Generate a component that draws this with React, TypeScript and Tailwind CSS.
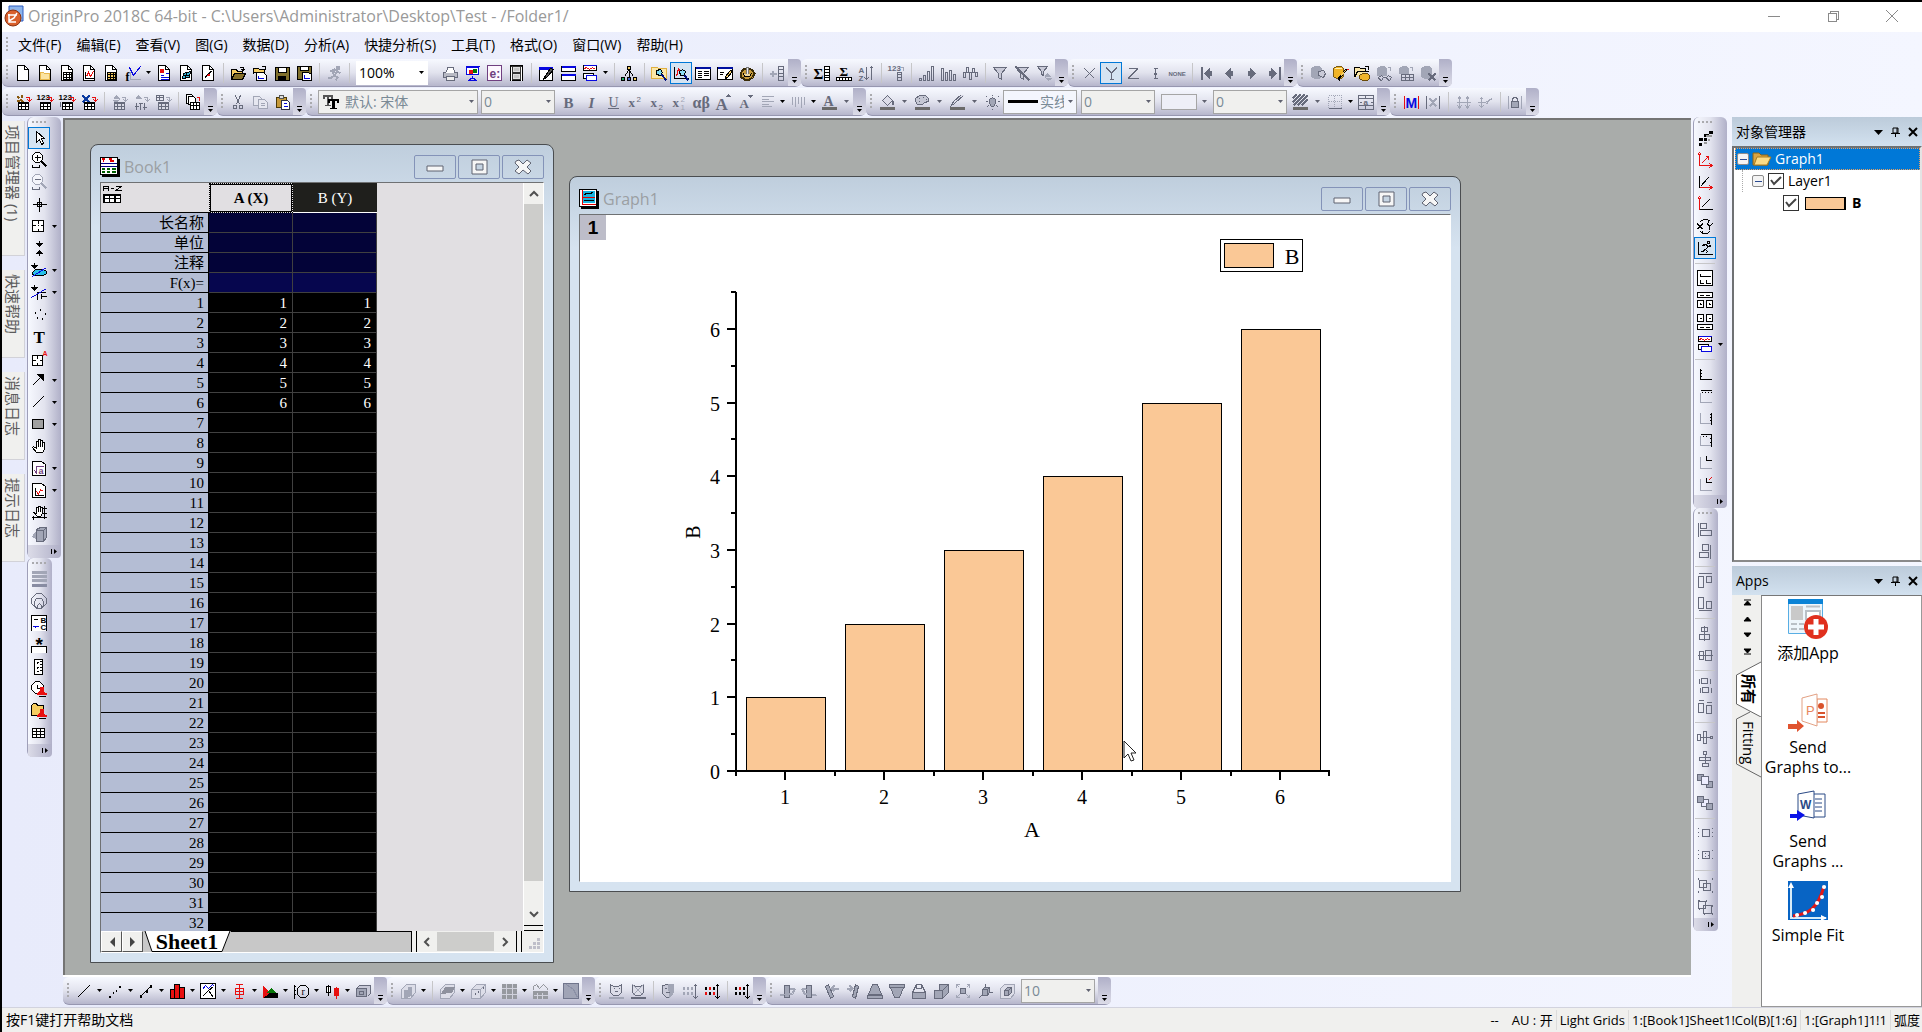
import { clsx } from 'clsx';
import { Fragment, useState } from 'react';
import type { ReactNode } from 'react';

const G = '#676b7c';
const S = '#a2a6b6';
const R = '#e81010';
const B = '#0808e0';
const Y = '#f5cd62';

// Icons are drawn on a 16x16 pixel grid, integer coordinates are pixel centres
const p = (d: string, stroke = '#000', fill = 'none', w = 1) => (
  <path key={d + stroke} d={d} stroke={stroke} fill={fill} strokeWidth={w} />
);
const t = (text: string, x: number, y: number, size: number, fill = '#000', weight = 700, family = 'Liberation Sans') => (
  <text key={text + x + y} x={x} y={y} fontSize={size} fill={fill} fontWeight={weight} fontFamily={family} stroke="none">
    {text}
  </text>
);

const page = 'M2 0H9L13 4V15H2Z';
const fold = 'M9 0V4H13';
const smallTable = (c = '#000', bg = '#fff') => [
  p('M3 8H13V15H3Z', c, bg),
  p('M3 9H13M3 12H13M6 8V15M10 8V15', c),
];
const arrowIn = (c: string) => p('M10 3H14V6M12 5L14 7L16 5', c);
const serif = 'Liberation Serif';

const icons: Record<string, ReactNode> = {
  // standard
  newProject: [p(page, '#000', '#fff'), p(fold)],
  newFolder: [p(page, '#000', '#fff'), p(fold), p('M3 7H6L7 8H12V14H3Z', '#e8b84c', '#fbe3a0')],
  newBook: [p(page, '#000', '#fff'), p(fold), p('M4 7H12V14H4ZM4 9H12M4 12H12M7 7V14M10 7V14')],
  newGraph: [p(page, '#000', '#fff'), p(fold), p('M4 6V13H12', '#000'), p('M5 11L7 7L9 11L12 6', R)],
  newMatrix: [p(page, '#000', '#fff'), p(fold), p('M4 7H12V14H4ZM4 9H12M4 12H12M7 7V14M10 7V14', '#000', Y)],
  newFunction: [p('M4 2L8 10L11 6L15 1', B), p('M1 14V9M15 14H5V6', S), t('f', 0, 15, 12, '#000', 700, serif)],
  newLayout: [p(page, '#000', '#fff'), p(fold), p('M4 4H7V7H4Z', R, R), p('M4 10H7M4 12H12M4 14H12M9 8H12', B)],
  newNotes: [p(page, '#000', '#fff'), p(fold), p('M5 8L12 6L11 12L4 13Z', '#000', '#38b6d8'), p('M5 10H11M8 7L7 13')],
  newExcel: [p(page, '#000', '#fff'), p(fold), p('M4 13L7 9L12 5'), p('M6 10H9V8', R, R)],
  open: [p('M1 14V4H6L7 6H12V8', '#000', Y), p('M1 14L4 8H15L12 14Z', '#000', '#86702a'), p('M9 2H13V5M14 4L13 5L11 4')],
  openTemplate: [p('M1 8V3H6L7 4H12V7H1', '#000', Y), p('M4 7H11L14 10V15H4Z', '#000', '#fff'), p('M6 10V13H11', B), p('M9 1H13V4')],
  save: [p('M1 2H15V15H1Z', '#000', '#80702c'), p('M4 2H12V7H4Z', '#000', '#fff'), p('M4 11H11V15H4Z', '#000', '#000')],
  saveTemplate: [p('M1 1H15V14H1Z', '#000', '#80702c'), p('M4 1H12V5H4Z', '#000', '#fff'), p('M6 7H12L15 9V15H6Z', '#000', '#fff'), p('M8 9V13H13', B)],
  runner: [p('M10 1H12V3H10ZM4 6L8 4L11 6L8 10L11 12L9 15M8 10L5 12H1M11 6L14 8M8 5L6 9', S, 'none', 2)],
  print: [p('M1 7H15V12H1Z', G, '#b8bac4'), p('M4 7L5 2H11L12 7', G, '#fff'), p('M4 11H12V15H4Z', G, '#eee'), p('M13 9H13', '#1a1')],
  slide: [p('M1 1H15M2 2H14V9H2Z', B, '#fff'), p('M5 5H8V8H5Z', R, R), p('M9 4H12V7H9Z', '#070', '#070'), p('M8 10V13M4 15H12L8 12Z', B)],
  refresh: [p('M1 0H15V15H1Z', '#704080', '#fdf8ff'), t('e:', 3, 12, 12, '#704080')],
  film: [p('M2 0H14V15H2Z', '#000', '#333'), p('M5 2H11V6H5ZM5 9H11V13H5Z', '#ddd', '#c4c4c4'), p('M3 1V15M13 1V15', '#fff')],
  code: [p('M1 2H14V15H1Z', '#000', '#fff'), p('M1 2H14V4H1Z', B, B), p('M12 3L7 10L5 14L9 11L15 4Z', '#000', '#555')],
  tile: [p('M1 1H15V6H1ZM1 9H15V15H1Z', '#000', '#fff'), p('M1 1H15M1 2H15M1 9H15M1 10H15', B)],
  cascade: [p('M1 0H14V5H1Z', '#000', '#fff'), p('M1 0H14', B), p('M2 3L4 2L7 4L10 2L13 4', R), p('M1 8H11V13H1Z', '#000', '#fff'), p('M4 10H14V15H4Z', B, '#fff')],
  tree: [p('M6 1H9V4H6Z', '#000', Y), p('M7 5L3 11M8 5L12 11M8 5V11'), p('M0 12H3V15H0Z', '#000', '#2a6'), p('M6 12H9V15H6Z', '#000', '#46c'), p('M12 12H15V15H12Z', '#000', Y)],
  explorer: [p('M0 2H6L7 3H15V13H0Z', '#e0b040', '#fbe7a8'), p('M5 5L9 4L11 7L9 10L5 9Z', '#000', '#7cd8f0'), p('M10 9L15 15', '#00107c', 'none', 2)],
  quick: [p('M1 1V13H15'), p('M3 11L5 3L8 8', R), p('M6 6L9 4L12 6L11 10L7 10Z', '#000', '#8fe0f4'), p('M11 10L15 15', '#00107c', 'none', 2)],
  results: [p('M0 2H15V14H0Z', '#000', '#fff'), p('M0 2H15M0 3H15', '#0010a0'), p('M2 6H6M8 6H13M2 8H6M8 8H13M2 10H6M8 10H13M2 12H6')],
  script: [p('M0 2H15V14H0Z', '#000', '#fff'), p('M0 2H15M0 3H15', '#0010a0'), p('M2 7H6M2 9H5'), p('M13 5L8 11L8 13L10 12L15 6Z', '#000', Y)],
  gear: [p('M3 5L5 3H10L13 5L15 8L13 12L10 14H5L1 11L1 8Z', '#3a2c08', '#c69a3a', 2), p('M7 2V9H9V2Z', '#777', '#eee'), p('M4 8L5 11H10L12 8', '#000', '#eed9a0')],
  addCol: [p('M0 8H7M3 5V11', S, 'none', 2), p('M9 1H14V15H9ZM9 4H14M9 8H14M9 11H14', G)],
  // column statistics
  sumCol: [t('Σ', -1, 13, 15, '#000', 700, serif), p('M10 1H15V15H10ZM10 4H15M10 7H15M10 10H15M10 12H15', '#000', '#fff')],
  sumRow: [t('Σ', 3, 10, 13, '#000', 700, serif), p('M0 12H15V15H0ZM3 12V15M6 12V15M9 12V15M12 12V15', '#000', '#fff')],
  sortAz: [t('A', 0, 7, 8, G), t('Z', 0, 15, 8, G), p('M8 1V14M6 12L8 14L10 12M13 14V1M11 3L13 1L15 3', G)],
  set123: [t('123', -1, 5, 8, G), p('M9 7H13V15H9ZM9 9H13M9 12H13', G), p('M12 2H15V5', S)],
  bars1: [p('M1 13H3V15H1ZM5 10H7V15H5ZM9 6H11V15H9ZM13 1H15V15H13Z', G)],
  bars2: [p('M1 3H3V15H1ZM5 7H7V15H5ZM9 5H11V15H9ZM13 9H15V15H13Z', G)],
  bars3: [p('M0 7H3V12H1V7M4 2H6V7H4ZM7 7H9V14H7ZM10 3H12V7H10ZM13 7H15V11H13Z', G)],
  filter: [p('M1 2H14L9 8V14L6 12V8Z', G, '#c9cad8')],
  filterOff: [p('M1 2H14L9 8V14L6 12V8Z', G, '#c9cad8'), p('M1 1L15 15', G, 'none', 2)],
  filterRe: [p('M1 1H11L7 6V10L5 9V6Z', G, '#c9cad8'), p('M8 11L11 8L14 11H8M9 12L12 15L15 13', S, S)],
  // plot designations
  setX: [p('M3 3L13 13M13 3L3 13', G, 'none', 1.4)],
  setY: [p('M3 2L8 8L13 2M8 8V14M6 14H10', G, 'none', 1.4)],
  setZ: [p('M3 3H12L3 13H13', G, 'none', 1.4)],
  setErr: [p('M6 3H10M6 13H10M8 3V13M7 8H9V9H7Z', G)],
  setNone: [t('NONE', -1, 10, 6, G)],
  first: [p('M2 1V14', G, 'none', 2), p('M5 8L10 3V6H12V10H10V13Z', G, G)],
  prev: [p('M4 8L9 3V6H11V10H9V13Z', G, G)],
  next: [p('M12 8L7 3V6H5V10H7V13Z', G, G)],
  last: [p('M14 1V14', G, 'none', 2), p('M11 8L6 3V6H4V10H6V13Z', G, G)],
  // database
  dbFind: [p('M1 3L4 1H9L11 3V11L9 13H4L1 11Z', S, S), p('M8 6L13 5L15 8L13 12L8 10Z', G, '#c9cad8')],
  dbEdit: [p('M1 3L4 1H9L11 3V11L9 13H4L1 11Z', '#7a5a10', '#f0b428'), p('M2 3H9', '#fff0b0'), p('M14 4L7 12L6 15', '#000', 'none', 2), p('M13 5L8 11', Y), p('M15 3V4', R, R, 2)],
  dbOpen: [p('M0 12V2H5L6 3H11V6', '#000', '#fbe7a8'), p('M0 12L3 6H14', '#000', '#fbe7a8'), p('M5 10L8 8H13L15 10V13L13 15H8L5 13Z', '#6a4a08', '#f0b428'), p('M10 1H14V4')],
  dbView: [p('M1 3L4 1H8L10 3V10H1Z', S, S), p('M2 12L5 10L7 12L5 15L3 14ZM10 12L12 10L15 12L13 15L11 14ZM7 12H10', G), p('M11 2H14V5', S)],
  dbTable: [p('M1 3L4 1H8L10 3V8H1Z', S, S), p('M3 9H15V15H3ZM3 12H15M7 9V15M11 9V15', G), p('M11 2H14V5', S)],
  dbDel: [p('M1 3L4 1H9L11 3V11L9 13H4L1 11Z', S, S), p('M8 8L15 15M15 8L8 15', G, 'none', 2)],
  // import
  wizard: [p('M2 2L4 4M6 0V3M1 6H4M5 5L8 8', '#8a5a10', 'none', 2), arrowIn(R), ...smallTable()],
  imp1: [t('123', -1, 5, 8), arrowIn(R), ...smallTable()],
  imp2: [t('123', -1, 5, 8), arrowIn(R), ...smallTable(), p('M1 7V12', G)],
  impX: [p('M1 1L8 8M8 1L1 8', '#0a3aa0', 'none', 2), arrowIn(R), ...smallTable()],
  re1: [p('M2 5L5 1L8 4M8 5L5 8L2 6', S, S), arrowIn(S), ...smallTable(G, '#d8d9e4')],
  re2: [p('M2 5L5 1L8 4', S, S), arrowIn(S), p('M3 8V15M7 8V15M11 8V15M1 12H5M5 9H9M9 13H13', G)],
  re3: [p('M1 1H8V6H1ZM1 3H8M4 1V6', G), arrowIn(S), ...smallTable(G, '#d8d9e4')],
  copies: [p('M1 0H6L8 2V9H1Z', '#000', '#fff'), p('M3 2H8L10 4V10H3Z', '#000', '#fff'), p('M11 3H14V6', R), p('M5 8H14V15H5ZM5 11H14M8 8V15M11 8V15', '#000', '#fff')],
  cut: [p('M5 1L9 10M10 1L6 10', G), p('M3 11H6V14H3ZM9 11H12V14H9Z', G)],
  copy: [p('M1 2H7L9 4V11H1Z', S, '#e6e7f0'), p('M6 5H12L15 8V14H6Z', S, '#e6e7f0'), p('M8 9H12M8 11H12', S)],
  paste: [p('M2 3H12V13H2Z', '#4c3a08', '#c79a3a'), p('M5 1H9V4H5Z', '#555', '#ddd'), p('M7 6H13L15 8V15H7Z', '#334', '#fff'), p('M9 9H12M9 12H13', B)],
  // format
  bold: [t('B', 2, 13, 15, G, 700, serif)],
  italic: [<text key="i" x="5" y="13" fontSize="15" fontWeight="700" fontStyle="italic" fill={G} stroke="none" fontFamily={serif}>I</text>],
  underline: [t('U', 3, 12, 14, G, 400, serif), p('M2 14H13', G)],
  sup: [t('x', 1, 12, 13, G, 700, serif), t('2', 9, 7, 8, G, 400)],
  sub: [t('x', 1, 12, 13, G, 700, serif), t('2', 9, 15, 8, G, 400)],
  supsub: [t('x', 1, 12, 13, G, 700, serif), t('2', 9, 7, 8, S, 400), t('1', 9, 15, 8, S, 400)],
  greek: [t('αβ', -1, 13, 16, G, 700, serif)],
  bigger: [t('A', 0, 15, 17, G, 700, serif), p('M11 2H15L13 0Z', G, G)],
  smaller: [t('A', 2, 13, 13, G, 700, serif), p('M11 1H15L13 3Z', G, G)],
  alignLeft: [p('M2 2H14M2 5H9M2 7H14M2 10H9M2 12H12', S)],
  alignTop: [p('M2 2V10M5 2V12M8 2V9M11 2V13M14 2V10', S)],
  fontColor: [t('A', 2, 11, 14, G, 700, serif), p('M0 14H15', '#6b6a6a', 'none', 3)],
  fill: [p('M3 6L8 1L13 6L8 11Z', G, '#dcdce8'), p('M13 6V10', G, G, 2), p('M0 14H15', '#6b6a6a', 'none', 3)],
  palette: [p('M1 4L5 1H11L14 4V7L10 8L8 10H3L1 7Z', G, '#c5c7d4'), p('M4 4H5M8 3H9M11 5H12M4 7H5', G), p('M0 14H15', '#6b6a6a', 'none', 3)],
  pen: [p('M14 1L5 9L2 11L4 7L12 0', G, '#dcdce8'), p('M0 14H15', '#6b6a6a', 'none', 3)],
  light: [p('M5 5L8 3L11 5V9L9 12H7L5 9Z', G, S), p('M8 0V1M1 7H3M13 7H15M2 2L3 3M14 2L13 3M2 13L4 11M14 13L12 11M8 14V15', G)],
  pattern: [p('M0 4L4 0M0 8L8 0M1 11L12 0M5 11L15 1M9 11L15 5', G, 'none', 2), p('M0 14H15', '#6b6a6a', 'none', 3)],
  borders: [<path key="b" d="M1 1H14V14H1ZM1 7H14M7 1V14" stroke={S} strokeDasharray="1 1" fill="none" />, p('M1 14H14', G)],
  tableCell: [p('M0 1H15V15H0ZM0 4H15M0 11H15M7 1V4M7 11V15', G), t('a', 5, 10, 8, G), p('M1 8H3M12 8H14', G)],
  maskM: [p('M1 1V14M15 1V14', R), t('M', 2, 13, 14, '#0808e0')],
  maskX: [p('M1 1V14M14 1V14', G), p('M4 4L11 12M11 4L4 12', S, 'none', 2)],
  mask1: [p('M4 2V14M2 5L4 2L6 5M2 11L4 14L6 11M12 2V14M10 5L12 2L14 5M10 11L12 14L14 11M1 8H15', S)],
  mask2: [p('M4 3V13M2 5L4 3L6 5M2 11L4 13L6 11M0 8H8L15 4M9 10L12 5', S)],
  lock: [p('M1 1V14M14 1V14', S), p('M4 7H11V13H4Z', G, S), p('M5 7V4L7 3H8L10 4V7', G)],
  // tools
  pointer: [p('M5 1V12L8 9L10 14L12 13L10 8H13Z', '#000', '#fff')],
  zoomIn: [p('M4 0H8L11 3V7L8 10H4L1 7V3Z', '#000', '#fff'), p('M3 5H9M6 2V8'), p('M10 9L15 14', '#000', 'none', 2), p('M1 12V15H8V12')],
  zoomOut: [p('M4 0H8L11 3V7L8 10H4L1 7V3Z', S, '#f4f5fb'), p('M3 5H9', G), p('M10 9L15 14', S, 'none', 2), p('M1 12V15H8V12', G)],
  reader: [p('M8 1V15M1 8H15'), p('M6 6H10V10H6Z')],
  selector: [p('M1 2H12V13H1Z', '#000', '#fff'), p('M7 2V5M7 10V13M1 7H4M9 7H12M6 7H7')],
  dataSel: [p('M8 0V5M5 3L8 6L11 3ZM8 15V10M5 13L8 10L11 13Z', '#000', '#000')],
  regMask: [p('M3 0V5M0 3L3 6L6 3Z', '#000', '#000'), p('M1 10L4 7H12L15 9V11L12 13H4L1 12Z', '#000', '#28c0e8'), p('M1 14L15 5', B)],
  regCurve: [p('M3 0V5M0 3L3 6L6 3Z', '#000', '#000'), p('M6 15V8H14M9 12H15M10 9V14'), p('M0 13L15 4', B)],
  draw: [p('M8 3H9M3 6H4M13 7H14M5 11H6M10 12H11', '#000', 'none', 2)],
  text: [t('T', 2, 14, 17, '#000', 700, serif)],
  annot: [p('M1 5H11V15H1Z', '#000', '#fff'), p('M6 5V8M6 12V15M1 10H4M8 10H11'), t('A', 11, 5, 7, R)],
  arrow: [p('M1 13L11 3'), p('M6 2H12V8Z', '#000', '#000')],
  line: [p('M1 13L12 2', '#000', 'none', 1.4)],
  rect: [p('M1 3H12V12H1Z', '#000', '#a0a0a0')],
  hand: [p('M5 14L1 9L2 8L5 10V3H7V8V1H9V8V2H11V8V4H13V11L11 14Z', '#000', '#fff')],
  formula: [p('M1 1H10L14 4V15H1Z', '#000', '#fff'), p('M3 10L5 13V6H12', '#704080'), t('a', 7, 13, 9, '#704080')],
  graphObj: [p('M1 1H10L14 4V15H1Z', '#000', '#fff'), p('M4 5V13H12'), p('M5 9L7 12L9 7L12 9', R)],
  pan: [p('M5 11L2 8L5 9V3H7V7V2H9V7V3H11V9L9 12H6Z', '#000', '#fff'), p('M0 13H15M2 11V15M13 1V14M11 4H15M11 9H15')],
  rotate3d: [p('M5 3L9 1H15V11L12 15H5Z', G, S), p('M5 4H12V15M12 4L15 1', G), p('M1 10L4 6V12Z', S, S)],
  stack: [p('M0 1H15M0 5H15M0 9H15', S, 'none', 3), p('M0 14H15', '#888ca2', 'none', 3)],
  radial: [p('M5 0H10L15 5V10L10 15H5L0 10V5ZM5 5H10L12 8V12L9 15H6L3 12V8ZM6 15V12L8 10L10 12V15', G)],
  legend: [p('M0 15V0H15V15', '#000', '#fff'), p('M2 4H6'), p('M1 11H7M4 10V12', B), t('B', 9, 7, 8), t('C', 9, 14, 8)],
  asterisk: [t('*', 4, 13, 19), p('M0 15V9H15V15', '#000', '#fff')],
  colorScale: [p('M3 0H11V15H3Z', '#000', '#fff'), p('M8 2H11M8 5H11M8 8H11M8 11H11M5 3H7M6 2V4M5 8H7M6 7V9M5 12H7')],
  dateStamp: [p('M4 0H8L12 4V8L8 12H4L0 8V4Z', '#000', '#fff'), p('M6 3V7H9'), p('M9 6H12V9L13 12H15V13H6V12L9 9Z', R, R), p('M7 15H14')],
  projStamp: [p('M0 2L2 0H5L6 2H12V12H0Z', '#000', Y), p('M9 6H12V9L13 12H15V13H6V12L9 9Z', R, R), p('M7 15H14')],
  gridTable: [p('M1 3H13V12H1ZM1 6H13M1 9H13M5 3V12M9 3V12', '#000', '#fff')],
  // graph
  offset: [p('M11 2H15M6 5H11M1 9H5M6 9H9M1 14H4', '#000', 'none', 3), p('M8 5H14M10 9H12M6 12H9', '#999', 'none', 2)],
  rescale: [p('M2 1V13H15M0 3L2 0L4 3M12 11L15 13L12 15', R), p('M4 11L11 4M8 4H11V7', R)],
  rescaleX: [p('M2 1V13', '#000'), p('M2 13H15M12 11L15 13L12 15', R), p('M3 12L11 3')],
  rescaleY: [p('M2 1V13M0 3L2 0L4 3', R), p('M2 13H15M4 11L12 3')],
  swapXY: [p('M0 5L5 11M5 5L0 11', '#000', 'none', 1.4), p('M10 5L12 8L15 5M12 8V11', '#000', 'none', 1.4), p('M3 3L6 1H10L13 3M11 1V4M12 13L10 15H6L3 13M5 12V15')],
  speed: [p('M1 1V14H15'), p('M10 1H12V3H10ZM5 5L8 4L11 6L8 9L10 11L8 13M8 9L5 11H3M11 6L14 5', '#000', 'none', 1.4)],
  layers1: [p('M0 0H15V15H0Z', '#000', '#fff'), p('M3 3V6H13M3 9V13H6M9 9V13H13')],
  layers2: [p('M0 0H15V5H0ZM0 8H6V15H0ZM9 8H15V15H9Z', '#000', '#fff'), p('M3 2V3H6M9 2V3H12M3 10V12H4M12 10V12H13')],
  layers3: [p('M0 10H15V15H0ZM0 0H6V7H0ZM9 0H15V7H9Z', '#000', '#fff'), p('M3 12V13H6M9 12V13H12M3 3V4H4M12 3V4H13')],
  axL: [p('M3 2V13H14M2 4H4M2 7H4M2 10H4M6 12V13M9 12V13M12 12V13')],
  axT: [p('M3 4V14H14M6 13V14M9 13V14M12 13V14', S), p('M3 2H14M5 3V4M8 3V4M11 3V4M14 3V4')],
  axR: [p('M3 2V13H13M6 12V13M9 12V13', S), p('M14 2V14M12 4H14M12 7H14M12 10H14')],
  axBox: [p('M3 3V13H13M6 12V13M9 12V13', S), p('M3 2H14V14M6 3V4M9 3V4M12 6H14M12 10H14')],
  axIn: [p('M3 2V14H14M6 13V14M9 13V14', S), p('M9 1V6H14M11 5V6M10 3H10', '#000', 'none', 1.4)],
  axIn2: [p('M3 2V14H14M6 13V14M9 13V14', S), p('M9 1V6H14M11 5V6', '#000', 'none', 1.4), p('M11 4L14 1', R)],
  // object edit
  alL: [p('M1 1V15M3 2H9V7H3ZM3 9H14V14H3Z', G)],
  alR: [p('M13 1V15M5 1H11V7H5ZM2 9H11V14H2Z', G)],
  alT: [p('M1 0H14M1 3H6V14H1ZM9 3H14V9H9Z', G)],
  alB: [p('M1 15H14M1 2H6V13H1ZM9 6H14V13H9Z', G)],
  alV: [p('M7 0V15M4 2H10V6H4ZM2 9H12V14H2Z', G)],
  alH: [p('M0 8H15M2 4H6V12H2ZM8 3H14V13H8Z', G)],
  sameW: [p('M2 1V6M13 1V6M4 1H10V6H4ZM3 10V15M14 10V15M5 10H11V15H5Z', G)],
  sameH: [p('M1 1H6M9 3H14M1 4H6V13H1ZM9 6H14V14H9Z', G)],
  disH: [p('M0 5H3V11H0ZM6 2H9V14H6ZM13 7H15V9H13ZM3 8H13', G)],
  disV: [p('M6 0H9V3H6ZM2 6H13V9H2ZM5 12H11V15H5ZM8 3V12', G)],
  front: [p('M0 1H6V7H0ZM9 8H15V14H9Z', G, S), p('M4 3H11V11H4Z', G, '#eef')],
  back: [p('M4 4H11V11H4Z', G, '#eef'), p('M0 1H6V7H0ZM9 8H15V14H9Z', G, S)],
  grp1: [p('M5 4H12V11H5Z', G), p('M0 3H1M0 7H1M0 11H1M15 3H14M15 7H14M15 11H14', G)],
  grp2: [p('M5 4H12V11H5ZM7 6H8M10 8H11M7 9H8', G), p('M0 3H1M0 7H1M0 11H1M15 3H14M15 11H14', G)],
  grp3: [p('M2 3H9V10H2ZM6 6H13V13H6Z', G), p('M0 1H1M14 1H15M0 14H1M14 14H15', G, 'none', 2)],
  grp4: [p('M1 2H8V9H1ZM6 6H14V14H6Z', G), p('M0 1H2M8 1H9M1 9H2M14 14H15M6 14H7M14 6H15', G, 'none', 2)],
  // 2D graphs
  gLine: [p('M1 14L13 2')],
  gScatter: [p('M1 13H3M5 9H6M8 7H9M11 3H13', '#000', '#000', 2)],
  gLineSym: [p('M2 13L13 2'), p('M1 13H3M7 8H9M11 3H13', '#000', '#000', 3)],
  gColumn: [p('M1 6H5V15H1ZM5 1H10V15H5ZM10 4H15V15H10Z', '#000', R)],
  gMulti: [p('M0 0H15V15H0Z', '#000', '#fff'), p('M2 6L5 2L8 5L12 1L14 3', B), p('M2 13L8 7L13 14M8 7L13 3')],
  gBox: [p('M4 1H11M8 1V15M4 15H11M4 5H12V11H4ZM4 8H12', R)],
  gArea: [p('M1 5L8 10H15V14H1Z', '#000', '#000'), p('M1 3L7 9L1 14Z', R, R), p('M5 9L9 5L13 9Z', '#0a7a0a', '#0a7a0a')],
  gPolar: [p('M1 1V15M0 3H2M0 7H2M0 11H2'), p('M7 2H12L15 5V11L12 14H7L4 11V5Z'), t('r', 8, 11, 10, '#000', 400, serif)],
  gStock: [p('M4 1V12M2 3H6V9H2Z', '#000', '#fff'), p('M12 3V15M10 5H14V12H10Z', R, R)],
  gTemplate: [p('M1 5L4 2H15V10L12 13', G, '#c9cad8'), p('M1 5H11V13H1Z', G, S), p('M4 8H8V11H4Z', G)],
  g3d1: [p('M1 6L6 1H15V9L10 15H1Z', S, '#dcdde8'), p('M4 15V7H6V15M8 13V4H10V12', S, S, 2)],
  g3d2: [p('M1 6L6 1H15V9L10 15H1Z', S, '#dcdde8'), p('M2 10L6 4H15L12 9Z', '#8e919e', '#8e919e')],
  g3d3: [p('M1 6L6 1H15V9L10 15H1ZM1 6H10V15M10 6L15 1', S, '#dcdde8'), p('M4 10H5M7 8H8M12 4H13', G, G, 2)],
  gHeat: [p('M1 1H15V15H1Z', '#96999f', '#96999f'), p('M5 0V15M11 0V15M0 5H15M0 11H15', '#d0d1dc')],
  gHeat2: [p('M1 8H15V15H1Z', '#96999f', '#96999f'), p('M1 6V3L4 1L7 5L11 1L15 5V6', '#96999f'), p('M5 9V15M10 9V15M1 12H15', '#d0d1dc')],
  gImage: [p('M0 0H15V15H0Z', '#70758c', '#a0a4b6'), p('M3 1L10 6L14 14', '#8b90a6')],
  // mask + 3D rotation
  face1: [p('M2 1L5 3H10L13 1V9L10 12H5L2 9Z', G, '#dcdde8'), p('M5 5H6M10 5H11M6 8H9', G), p('M0 14H15', S, 'none', 2)],
  face2: [p('M2 1L5 3H10L13 1V9L10 12H5L2 9Z', G, '#dcdde8'), p('M2 1L13 12M13 1L2 12', S), p('M0 14H15', G, 'none', 2)],
  face3: [p('M2 2L7 1H13V9L9 14H6L2 10Z', G, '#c9cad8'), p('M8 1H13V9L9 14Z', S, S), p('M4 5H6M5 9H9', G)],
  dots1: [p('M0 5H2M4 5H6M8 5H10M0 10H2M4 10H6M8 10H10', S, 'none', 3), p('M13 1V15M11 3L13 1L15 3M11 13L13 15L15 13', G)],
  dots2: [p('M0 5H2M4 10H6M8 5H10', '#000', 'none', 3), p('M4 5H6M0 10H2M8 10H10', R, 'none', 3), p('M13 1V15M11 3L13 1L15 3M11 13L13 15L15 13')],
  dots3: [p('M0 5H2M8 5H10M0 10H2M4 10H6M8 10H10', '#000', 'none', 3), p('M4 5H6', R, 'none', 3), p('M13 1V15M11 3L13 1L15 3M11 13L13 15L15 13')],
  rotL: [p('M5 2H10V14H5Z', G, S), p('M1 11L5 12M11 5L15 6L13 10L10 11', S, 'none', 2)],
  rotR: [p('M5 2H10V14H5Z', G, S), p('M15 11L11 12M5 5L1 6L3 10L6 11', S, 'none', 2)],
  tiltL: [p('M2 3L5 1L10 13L7 15Z', G, S), p('M8 5H15M11 2L8 5L11 8', S, 'none', 2)],
  tiltR: [p('M13 3L10 1L7 13L10 15Z', G, S), p('M1 5H7M4 2L7 5L4 8', S, 'none', 2)],
  down: [p('M5 1H10L14 11H1ZM0 12H15V15H0Z', G, S)],
  up: [p('M1 4H14L10 14H5ZM0 1H15V4H0Z', G, S)],
  persp: [p('M1 9H14V15H1Z', G, S), p('M5 1H10L14 9H1ZM5 1V5H10V1', G)],
  persp2: [p('M6 1H15V9L9 15H1V7H6Z', G, S), p('M1 7H9V15M9 7L15 1', G)],
  fit: [p('M5 5H10V10H5Z', G, S), p('M1 1L4 4M14 1L11 4M1 14L4 11M14 14L11 11M1 4V1H4M11 1H14V4M1 11V14H4M14 11V14H11', S)],
  axes3d: [p('M8 0V5M1 15L6 10M10 9H15', G), p('M5 6L7 4H12V9L10 12H5ZM5 6H10V12M10 6L12 4', G, S)],
  cube: [p('M1 5L5 1H15V10L11 15H1Z', S, '#dcdde8'), p('M5 7L8 4H12V9L9 12H5ZM5 7H9V12M9 7L12 4', G, S)],
};

function Icon({ name }: { name: string }) {
  return (
    <svg width="16" height="16" viewBox="0 0 16 16" className="shrink-0 overflow-visible" shapeRendering="crispEdges" aria-hidden>
      <g transform="translate(.5 .5)">{icons[name]}</g>
    </svg>
  );
}

function Caret({ grey = false }: { grey?: boolean }) {
  return (
    <svg width="5" height="3" viewBox="0 0 5 3" aria-hidden>
      <path d="M0 0H5L2.5 3Z" fill={grey ? '#5f6170' : '#000'} />
    </svg>
  );
}

// "*name" is pressed, "name>" has a drop-down, "name>>" a wide grey one, "|" is a separator
function Tools({ items, vertical = false }: { items: (string | ReactNode)[]; vertical?: boolean }) {
  return items.map((item, i) => {
    if (typeof item !== 'string') return <Fragment key={i}>{item}</Fragment>;
    if (item === '|') {
      return (
        <span key={i} className={clsx('flex shrink-0 items-center justify-center', vertical ? 'h-2 w-[22px]' : 'h-5 w-2')}>
          <span className={clsx('bg-[#c6c6c8]', vertical ? 'h-px w-5' : 'h-5 w-px')} />
        </span>
      );
    }
    const name = item.replace(/[*>]/g, '');
    const wide = item.endsWith('>>');
    return (
      <span key={i} className="flex shrink-0 items-center">
        <button
          type="button"
          aria-label={name}
          className={clsx('flex size-[22px] items-center justify-center', item.startsWith('*') && 'border border-[#0078d7] bg-[#d5e4f2]')}
        >
          <Icon name={name} />
        </button>
        {item.endsWith('>') && (
          <button type="button" aria-label={`${name} options`} className={clsx('flex h-[22px] items-center justify-center', wide ? 'w-[13px]' : 'w-[9px]')}>
            <Caret grey={wide} />
          </button>
        )}
      </span>
    );
  });
}

function Bar({ items }: { items: (string | ReactNode)[] }) {
  return (
    <div role="toolbar" className="flex h-7 shrink-0 rounded-md border-b border-[#9797b0] bg-linear-to-b from-[#f7f9ff] via-[#e2e3ee] to-[#b6b6cc]">
      <span className="flex w-[10px] items-center justify-center">
        <span className="h-4 w-[2px] bg-[repeating-linear-gradient(#aaaaae_0_2px,transparent_2px_4px)]" />
      </span>
      <div className="flex items-center">
        <Tools items={items} />
      </div>
      <button type="button" aria-label="toolbar options" className="flex w-[13px] flex-col items-center justify-end gap-[2px] rounded-r-sm bg-linear-to-b from-[#b0b0c8] to-[#dcdce8] pb-[3px]">
        <span className="h-px w-[5px] bg-black" />
        <Caret />
      </button>
    </div>
  );
}

function SideBar({ items, wide = false }: { items: string[]; wide?: boolean }) {
  return (
    <div role="toolbar" className={clsx('flex flex-col rounded-md border-l border-[#9f9fb8] bg-linear-to-r from-[#f7f9ff] via-[#e2e3ee] to-[#b0b0c8]', wide ? 'w-[34px]' : 'w-[25px]')}>
      <span className="flex h-[10px] items-center px-1">
        <span className="h-[2px] w-4 bg-[repeating-linear-gradient(90deg,#aaaaae_0_2px,transparent_2px_4px)]" />
      </span>
      <Tools items={items} vertical />
      <button type="button" aria-label="toolbar options" className="flex h-[13px] items-center justify-end gap-[2px] rounded-b-sm bg-linear-to-r from-[#dcdce8] to-[#b0b0c8] pr-1">
        <span className="h-[5px] w-px bg-black" />
        <svg width="3" height="5" aria-hidden>
          <path d="M0 0L3 2.5L0 5Z" />
        </svg>
      </button>
    </div>
  );
}

interface ComboProps {
  label: string;
  value: string;
  className: string;
  light?: boolean;
  children?: ReactNode;
}

function Combo({ label, value, className, light, children }: ComboProps) {
  return (
    <label
      className={clsx(
        'flex h-6 shrink-0 items-center overflow-hidden border',
        light ? 'border-white bg-white text-black' : 'border-[#a5a5a5] bg-[#f0f0ee] text-[#7a8a96]',
        className,
      )}
    >
      {children}
      <select aria-label={label} className="h-5 min-w-0 flex-1 appearance-none bg-transparent pl-[2px] text-sm leading-5">
        <option>{value}</option>
      </select>
      <span className="flex w-[12px] shrink-0 justify-center">
        <Caret grey={!light} />
      </span>
    </label>
  );
}

const menus = ['文件(F)', '编辑(E)', '查看(V)', '图(G)', '数据(D)', '分析(A)', '快捷分析(S)', '工具(T)', '格式(O)', '窗口(W)', '帮助(H)'];

const standardBar = [
  'newProject', 'newFolder', 'newBook', 'newGraph', 'newMatrix', 'newFunction>', 'newLayout', 'newNotes', 'newExcel', '|',
  'open', 'openTemplate', 'save', 'saveTemplate', '|', 'runner', '|',
  <Combo label="缩放" value="100%" light className="mr-[11px] ml-[3px] w-[72px]" />,
  'print', 'slide', 'refresh', 'film', '|', 'code', 'tile', 'cascade>', '|', 'tree', '|',
  'explorer', '*quick', 'results', 'script', 'gear', '|', 'addCol',
];

const formatBar = [
  <Combo label="字体" value="默认: 宋体" className="ml-[2px] w-[160px]">
    <svg width="16" height="16" className="mx-1 shrink-0" shapeRendering="crispEdges" aria-hidden>
      <path d="M0 1H10V5H8V3H6V11H8V12H2V11H4V3H2V5H0Z" fill="#555" />
      <path d="M5 5H16V9H14V7H12V14H14V15H7V14H9V7H7V9H5Z" />
    </svg>
  </Combo>,
  <Combo label="字号" value="0" className="mx-[3px] w-[74px]" />,
  'bold', 'italic', 'underline', 'sup', 'sub', 'supsub', 'greek', 'bigger', 'smaller', 'alignLeft>', 'alignTop>', 'fontColor>>',
];

const styleBar = [
  'fill>>', 'palette>>', 'pen>>', 'light',
  <Combo label="线型" value="实线" className="w-[74px] bg-[#f4f6fd]">
    <span className="ml-1 h-[3px] w-[30px] shrink-0 bg-black" />
  </Combo>,
  <Combo label="线宽" value="0" className="mr-1.5 ml-1 w-[74px]" />,
  <button type="button" aria-label="填充颜色" className="flex items-center">
    <span className="h-4 w-9 border border-[#a5a5a5] bg-[#eeeff7]" />
    <span className="flex w-[14px] justify-center">
      <Caret grey />
    </span>
  </button>,
  <Combo label="图案宽度" value="0" className="mx-[2px] w-[74px]" />,
  'pattern>>', 'borders>', 'tableCell',
];

const toolsBar = [
  '*pointer', 'zoomIn', 'zoomOut', 'reader', 'selector>', 'dataSel', 'regMask>', 'regCurve>', 'draw', 'text', 'annot',
  'arrow>', 'line>', 'rect>', 'hand', 'formula>', 'graphObj>', 'pan', 'rotate3d',
];

const sideTabs = [
  { label: '项目管理器 (1)', height: 'h-[135px]' },
  { label: '快速帮助', height: 'h-[88px]' },
  { label: '消息日志', height: 'h-[88px]' },
  { label: '提示日志', height: 'h-[88px]' },
];

function MdiWindow({ title, icon, className, children }: { title: string; icon: ReactNode; className: string; children: ReactNode }) {
  return (
    <section className={clsx('absolute flex flex-col rounded-t-lg border border-[#4a4d50] bg-linear-to-b from-[#bfcedd] to-[#d6e3f0] to-10% px-[9px] pb-[9px]', className)}>
      <header className="flex h-[37px] shrink-0 items-center gap-1 pt-1.5">
        {icon}
        <h2 className="flex-1 text-base leading-6 text-[#9b9fa3]">{title}</h2>
        <div className="flex gap-[2px]">
          {['M8 7H24V12H8Z', 'M9 1H24V15H9ZM13 5V11H20V5Z', 'M9 2L12 1L16 5L20 1L24 4L20 8L24 12L21 15L16 11L12 15L8 12L12 8L8 4Z'].map((d, i) => (
            <button key={d} type="button" aria-label={['最小化', '最大化', '关闭'][i]} className="flex h-6 w-[42px] items-center justify-center rounded-xs border border-[#8493b8]">
              <svg width="32" height="16" viewBox="0 0 32 16" aria-hidden>
                <path d={d} fill="#f6f6f6" stroke="#5f6270" fillRule="evenodd" />
              </svg>
            </button>
          ))}
        </div>
      </header>
      <div className="flex min-h-0 flex-1 flex-col border border-t-[#6f7173] border-r-white border-b-white border-l-[#6f7173] bg-white">{children}</div>
    </section>
  );
}

const Chevron = ({ d }: { d: string }) => (
  <svg width="10" height="10" viewBox="0 0 10 10" fill="none" stroke="#505050" strokeWidth="2" aria-hidden>
    <path d={d} />
  </svg>
);

function Worksheet() {
  const rows = ['长名称', '单位', '注释', 'F(x)=', ...Array.from({ length: 32 }, (_, i) => String(i + 1))];
  return (
    <>
      <div className="flex min-h-0 flex-1">
        <div className="min-w-0 flex-1 overflow-hidden bg-[#e1dfe2]">
          <table className="w-[276px] table-fixed border-separate border-spacing-0 font-['Liberation_Serif','Noto_Sans_CJK_SC',serif] text-[15px] leading-[18px]">
            <colgroup>
              <col className="w-[108px]" />
              <col className="w-[84px]" />
              <col className="w-[84px]" />
            </colgroup>
            <thead>
              <tr className="h-[30px]">
                <th className="border-b border-black p-0 align-top">
                  <svg width="20" height="21" className="ml-[2px]" shapeRendering="crispEdges" aria-label="A-Z">
                    <path d="M.5 8V3.500H5.500V8M.5 5.500H5.500M8 5.500H11M13 3.500H18L13 7.500H18.500" fill="none" stroke="#000" />
                    <path d="M0 11H18V20H0Z" />
                    <path d="M2 13H6V15H2ZM7 13H11V15H7ZM13 13H17V15H13ZM2 16H6V19H2ZM7 16H11V19H7ZM13 16H17V19H13Z" fill="#fff" />
                  </svg>
                </th>
                <th className="border border-dotted border-black bg-[#e1dfe2] p-0">
                  <span className="flex h-7 items-center justify-center border border-black">A (X)</span>
                </th>
                <th className="border-b border-white bg-[#1f1f1c] p-0 font-normal text-white">B (Y)</th>
              </tr>
            </thead>
            <tbody>
              {rows.map((row, i) => {
                const value = i > 3 && i < 10 ? row : '';
                const cell = clsx(
                  'h-5 border-r border-b border-[#404040] py-0 pr-[5px] text-right text-white',
                  i < 3 ? 'bg-[#030338]' : i === 3 ? 'bg-[#06064e]' : 'bg-black',
                );
                return (
                  <tr key={row}>
                    <th scope="row" className="h-5 border-r border-b border-black bg-[#b4bdd4] py-0 pr-1 text-right font-normal">
                      {row}
                    </th>
                    <td className={cell}>{value}</td>
                    <td className={cell}>{value}</td>
                  </tr>
                );
              })}
            </tbody>
          </table>
        </div>
        <div className="flex w-5 flex-col items-center border-l border-white bg-[#f0f0ee]">
          <button type="button" aria-label="向上滚动" className="flex h-[21px] items-center">
            <Chevron d="M1 7L5 3L9 7" />
          </button>
          <span className="w-full flex-1 bg-[#cdcdcb]" />
          <button type="button" aria-label="向下滚动" className="flex h-11 items-end pb-1.5">
            <Chevron d="M1 3L5 7L9 3" />
          </button>
          <span className="h-1.5 w-full border-y border-black bg-[#f0f0ee]" />
        </div>
      </div>
      <div className="flex h-[21px] shrink-0 bg-[#c8c8c8]">
        {['M8 0L3 5L8 10Z', 'M2 0L7 5L2 10Z'].map((d, i) => (
          <button key={d} type="button" aria-label={i ? '下一个' : '上一个'} className="flex w-[21px] items-center justify-center border border-t-white border-r-[#555] border-b-[#555] border-l-white bg-[#f0f0ee]">
            <svg width="10" height="10" aria-hidden>
              <path d={d} fill="#444" />
            </svg>
          </button>
        ))}
        <button type="button" className="grid w-[88px] place-items-center">
          <svg width="88" height="21" className="[grid-area:1/1]" aria-hidden>
            <path d="M2 0L9 20.500H79L87 0" fill="#fff" stroke="#000" />
          </svg>
          <span className="font-['Liberation_Serif'] text-[22px] leading-5 font-bold [grid-area:1/1]">Sheet1</span>
        </button>
        <span className="flex-1 border-t border-r border-black" />
        <span className="w-[5px] border-r border-black bg-[#f0f0ee]" />
        <div className="flex w-[100px] items-center justify-between border-r border-black bg-[#f0f0ee]">
          <button type="button" aria-label="向左滚动" className="flex w-5 justify-center">
            <Chevron d="M7 1L3 5L7 9" />
          </button>
          <span className="h-[19px] flex-1 bg-[#cdcdcb]" />
          <button type="button" aria-label="向右滚动" className="flex w-[22px] justify-center">
            <Chevron d="M3 1L7 5L3 9" />
          </button>
        </div>
        <span className="w-[5px] border-r border-black bg-[#f0f0ee]" />
        <span className="flex w-[21px] items-end justify-end bg-[#f0f0ee] p-[2px]">
          <svg width="12" height="12" fill="#bfbfc9" aria-hidden>
            <path d="M8 0h3v3h-3zM4 4h3v3h-3zM8 4h3v3h-3zM0 8h3v3h-3zM4 8h3v3h-3zM8 8h3v3h-3z" />
          </svg>
        </span>
      </div>
    </>
  );
}

const bars = [1, 2, 3, 4, 5, 6];

function Chart() {
  const x = (v: number) => Math.round(156 + (v - 0.5) * 98.9);
  const y = (v: number) => Math.round(556 - v * 73.7);
  return (
    <svg viewBox="0 0 870 666" className="min-h-0 w-full flex-1 font-['Liberation_Serif']" role="img" aria-label="B - A">
      <rect width="26" height="25" fill="#bdbdc9" />
      <text x="13" y="19" fontSize="19" fontWeight="700" textAnchor="middle" fontFamily="Liberation Sans">1</text>
      <g shapeRendering="crispEdges" stroke="#000">
        <rect x="640.5" y="24.5" width="82" height="32" fill="#fff" />
        <rect x="644.5" y="28.5" width="49" height="24" fill="#fac896" />
        {bars.map(v => (
          <rect key={v} x={x(v) - 38.5} y={y(v) + 0.5} width="79" height={556 - y(v)} fill="#fac896" />
        ))}
        <path d={`M156 ${y(6.5)}V557M155 556H${x(6.5) + 1}`} strokeWidth="2" />
        {[0, ...bars].map(v => (
          <path key={v} d={`M147 ${y(v)}H156M151 ${y(v + 0.5)}H156M${x(v + 0.5)} 556V561`} strokeWidth="2" />
        ))}
        {bars.map(v => (
          <path key={v} d={`M${x(v)} 556V565`} strokeWidth="2" />
        ))}
      </g>
      <g fontSize="20" textAnchor="middle">
        {[0, ...bars].map(v => (
          <text key={v} x="135" y={y(v) + 8}>{v}</text>
        ))}
        {bars.map(v => (
          <text key={v} x={x(v)} y="589">{v}</text>
        ))}
      </g>
      <g fontSize="22" textAnchor="middle">
        <text x="452" y="622">A</text>
        <text x="712" y="49">B</text>
        <text transform="translate(120 317) rotate(-90)" fontSize="20">B</text>
      </g>
      <path d="M544 526V543L548 539L551 546L554 545L551 538H556Z" fill="#fff" stroke="#222" />
    </svg>
  );
}

const BookIcon = () => (
  <svg width="20" height="20" shapeRendering="crispEdges" aria-hidden>
    <path d="M2 2H20V20H2Z" />
    <path d="M.5 .5H17.500V17.500H.5Z" fill="#fff" stroke="#000" />
    <path d="M2 2H5M9 2H12M3 4H4M10 4H14" stroke="#e00000" strokeWidth="2" />
    <path d="M1 6.500H17M1 9.500H17" stroke="#000080" />
    <path d="M2 12H5M7 12H10M12 12H16M2 15H5M7 15H10M12 15H16" stroke="#006000" strokeWidth="2" />
  </svg>
);

const GraphIcon = () => (
  <svg width="20" height="20" shapeRendering="crispEdges" aria-hidden>
    <path d="M2 2H20V20H2Z" />
    <path d="M.5 .5H17.500V17.500H.5Z" fill="#fff" stroke="#000" />
    <path d="M3 2H16V14H3Z" fill="#18b4e0" />
    <path d="M3 1V15H17M3 8H16" stroke="#e00000" fill="none" />
    <path d="M5 6L8 4L11 5L14 3M5 11H8L10 12L15 11" stroke="#000" fill="none" />
  </svg>
);

function DockTitle({ title }: { title: string }) {
  return (
    <header className="flex h-[29px] shrink-0 items-center bg-linear-to-b from-[#bccbda] to-[#d2e1ef] pr-px pl-1 text-sm">
      <h2 className="flex-1 leading-5">{title}</h2>
      {['M0 3H9L4.500 8Z', 'M2 1H7V6H2ZM6 1V6M0 6.500H9M4.500 6V10', 'M1 1L9 9M9 1L1 9'].map((d, i) => (
        <button key={d} type="button" aria-label={['菜单', '自动隐藏', '关闭'][i]} className="flex w-[17px] justify-center">
          <svg width="10" height="10" fill={i ? 'none' : '#000'} stroke={i ? '#000' : 'none'} strokeWidth={i === 2 ? 2 : 1} aria-hidden>
            <path d={d} />
          </svg>
        </button>
      ))}
    </header>
  );
}

function Check({ label }: { label: string }) {
  const [checked, setChecked] = useState(true);
  return (
    <span className="grid size-4 place-items-center">
      <input type="checkbox" aria-label={label} checked={checked} onChange={() => setChecked(!checked)} className="size-4 appearance-none border border-[#333] bg-white [grid-area:1/1]" />
      {checked && (
        <svg width="12" height="10" className="pointer-events-none [grid-area:1/1]" fill="none" stroke="#444" strokeWidth="2" aria-hidden>
          <path d="M1 4L4 8L11 1" />
        </svg>
      )}
    </span>
  );
}

const Minus = () => (
  <button type="button" aria-label="折叠" className="flex size-3 items-center justify-center rounded-xs border border-[#8c8c8c] bg-[#f4f4f4]">
    <span className="h-px w-[7px] bg-[#2a4a90]" />
  </button>
);

const apps = [
  {
    label: '添加App',
    art: (
      <>
        <path d="M.5 .5H34.500V34.500H.5Z" fill="#eef6fc" stroke="#58aee4" />
        <path d="M0 0H35V5H0Z" fill="#0b83d6" />
        <path d="M3 7H15V21H3Z" fill="#c9c9c9" />
        <path d="M18 7.500H32M18 12H32V20H18ZM3 25H9M11 25H16M3 30H9M11 30H16" stroke="#b9c0c6" strokeWidth="2" fill="#fff" />
        <circle cx="28" cy="28" r="12" fill="#e0301e" />
        <path d="M28 20V36M20 28H36" stroke="#fff" strokeWidth="5" />
      </>
    ),
  },
  {
    label: 'Send\nGraphs to...',
    art: (
      <>
        <path d="M29 6H39V29H29Z" fill="#fff" stroke="#e3885f" />
        <circle cx="33" cy="13" r="3" fill="#d9532c" />
        <path d="M30 20H37M30 24H37" stroke="#d9532c" strokeWidth="2" />
        <path d="M14 5L29 1V33L14 28Z" fill="#fff" stroke="#e3a184" />
        <text x="18" y="22" fontSize="13" fill="#e8865c" fontFamily="Liberation Sans">P</text>
        <path d="M0 31H9V27L16 33L9 39V36H0Z" fill="#e0532f" />
      </>
    ),
  },
  {
    label: 'Send\nGraphs ...',
    art: (
      <>
        <path d="M25 7H37V30H25Z" fill="#fff" stroke="#2b4a86" />
        <path d="M27 12H34M27 16H34M27 20H34M27 24H34" stroke="#2b4a86" />
        <path d="M10 7L26 4V31L10 28Z" fill="#fff" stroke="#2b4a86" />
        <text x="12" y="22" fontSize="12" fontWeight="700" fill="#2b4a86" fontFamily="Liberation Sans">W</text>
        <path d="M2 27H9V23L17 28L9 34V31H2Z" fill="#0a12e8" />
      </>
    ),
  },
  {
    label: 'Simple Fit',
    art: (
      <>
        <path d="M0 0H40V39H0Z" fill="#0864c4" />
        <path d="M3 4V37H38" stroke="#d8ecf8" strokeWidth="2" fill="none" />
        <path d="M0 7L3 1L6 7ZM33 34L39 37L33 40Z" fill="#fff" />
        <path d="M5 35C20 33 30 28 36 5" stroke="#e01818" strokeWidth="3" fill="none" />
        <path d="M9 34h.1M17 32h.1M25 29h.1M29 22h.1M34 16h.1M36 6h.1" stroke="#fff" strokeWidth="4" strokeLinecap="round" />
      </>
    ),
  },
];

export default function App() {
  return (
    <div className="flex min-h-screen flex-col border-t-2 border-l-2 border-black bg-linear-to-r from-[#e8ebfb] to-[#f4f6ff] font-['Open_Sans','Noto_Sans_CJK_SC',sans-serif] text-black">
      <header className="flex h-[30px] items-center bg-white pb-[2px] pl-[2px] text-[#999]">
        <svg width="20" height="22" viewBox="0 0 20 22" aria-hidden>
          <path d="M5 1H19V16H5Z" fill="#8cb4ec" stroke="#2c5cc0" />
          <circle cx="9" cy="13" r="8" fill="#d9602c" stroke="#8a3210" />
          <path d="M4 10H13M5 16L10 13L13 8M5 9V17H12" stroke="#fff" strokeWidth="1.500" fill="none" />
        </svg>
        <h1 className="flex-1 pl-1 text-base leading-6">OriginPro 2018C 64-bit - C:\Users\Administrator\Desktop\Test - /Folder1/</h1>
        {['M0 7H12', 'M1 4H9V12H1ZM3 4V2H11V10H9', 'M0 1L12 13M12 1L0 13'].map((d, i) => (
          <button key={d} type="button" aria-label={['最小化', '还原', '关闭'][i]} className="flex w-[59px] justify-center">
            <svg width="13" height="14" fill="none" stroke="#8a8a8a" shapeRendering={i < 2 ? 'crispEdges' : 'auto'} aria-hidden>
              <path d={d} />
            </svg>
          </button>
        ))}
      </header>

      <nav className="flex h-[27px] items-center pb-[2px] text-sm leading-5">
        <span className="mr-2 ml-[4px] h-4 w-[2px] bg-[repeating-linear-gradient(#aaaaae_0_2px,transparent_2px_4px)]" />
        {menus.map(menu => (
          <button key={menu} type="button" className="mr-[15px] first-of-type:ml-[2px]">
            {menu}
          </button>
        ))}
      </nav>

      <div className="flex h-[29px]">
        <Bar items={standardBar} />
        <Bar items={['sumCol', 'sumRow', 'sortAz', '|', 'set123', '|', 'bars1', 'bars2', 'bars3', '|', 'filter', 'filterOff', 'filterRe']} />
        <Bar items={['setX', '*setY', 'setZ', 'setErr', 'setNone', '|', 'first', 'prev', 'next', 'last']} />
        <Bar items={['dbFind', 'dbEdit', 'dbOpen', 'dbView', 'dbTable', 'dbDel']} />
      </div>
      <div className="flex h-[29px]">
        <Bar items={['wizard', 'imp1', 'imp2', 'impX', '|', 're1', 're2', 're3', '|', 'copies']} />
        <Bar items={['cut', 'copy', 'paste']} />
        <Bar items={formatBar} />
        <Bar items={styleBar} />
        <Bar items={['maskM', 'maskX', '|', 'mask1', 'mask2', '|', 'lock']} />
      </div>

      <div className="flex flex-1">
        <div className="flex w-[25px] flex-col gap-[14px] pt-1">
          {sideTabs.map(tab => (
            <button
              key={tab.label}
              type="button"
              className={clsx(
                'flex w-[23px] items-center justify-start border-r border-b border-[#d2d2d8] bg-[#f0f0ee] pt-1 text-[15px] leading-[22px] whitespace-pre text-[#5c5c5c] [text-orientation:sideways] [writing-mode:vertical-rl]',
                tab.height,
              )}
            >
              {tab.label}
            </button>
          ))}
        </div>
        <div className="w-9">
          <SideBar wide items={toolsBar} />
          <SideBar items={['stack', 'radial', 'legend', 'asterisk', 'colorScale', 'dateStamp', 'projStamp', 'gridTable']} />
        </div>

        <div className="flex min-w-0 flex-1 flex-col">
          <main className="relative mt-px flex-1 overflow-hidden border-t-2 border-l-2 border-[#747474] bg-[#a9acaa]">
            <MdiWindow title="Book1" icon={<BookIcon />} className="top-6 left-[25px] h-[819px] w-[464px]">
              <Worksheet />
            </MdiWindow>
            <MdiWindow title="Graph1" icon={<GraphIcon />} className="top-14 left-[504px] h-[716px] w-[892px]">
              <Chart />
            </MdiWindow>
          </main>
          <div className="flex h-8 border-t-2 border-white">
            <Bar items={['gLine>', 'gScatter>', 'gLineSym>', 'gColumn>', 'gMulti>', 'gBox>', 'gArea>', 'gPolar>', 'gStock>', 'gTemplate']} />
            <Bar items={['g3d1>', '|', 'g3d2>', 'g3d3>', 'gHeat>', 'gHeat2>', 'gImage']} />
            <Bar items={['face1', 'face2', '|', 'face3', 'dots1', 'dots2', '|', 'dots3']} />
            <Bar
              items={[
                'rotL', 'rotR', 'tiltL', 'tiltR', 'down', 'up', 'persp', 'persp2', 'fit', 'axes3d', 'cube',
                <Combo label="角度" value="10" className="mx-[3px] w-[74px]" />,
              ]}
            />
          </div>
        </div>

        <div className="w-[41px] pl-[2px]">
          <SideBar
            wide
            items={['offset', 'rescale', 'rescaleX', 'rescaleY', 'swapXY', '*speed', '|', 'layers1', 'layers2', 'layers3', 'cascade>', '|', 'axL', 'axT', 'axR', 'axBox', 'axIn', 'axIn2']}
          />
          <SideBar
            items={['alL', 'alR', '|', 'alT', 'alB', '|', 'alV', 'alH', '|', 'sameW', 'sameH', '|', 'disH', 'disV', 'front', 'back', '|', 'grp1', 'grp2', '|', 'grp3', 'grp4']}
          />
        </div>

        <aside className="flex w-[190px] flex-col">
          <DockTitle title="对象管理器" />
          <div className="h-[416px] border-2 border-t-[#6f7173] border-r-[#e4e4e4] border-b-[#8a8a8a] border-l-[#6f7173] bg-white pl-px text-sm">
            <div className="flex h-[22px] items-center gap-[3px] border border-dotted border-[#e8a060] bg-[#0078d7] pl-px text-white">
              <Minus />
              <svg width="20" height="16" aria-hidden>
                <path d="M1 14V2H7L9 4H16V14Z" fill="#d9a441" stroke="#8a6414" />
                <path d="M2 14L5 6H19L15 14Z" fill="#fbdc86" stroke="#a87c20" />
              </svg>
              <span className="leading-5">Graph1</span>
            </div>
            <div className="flex h-[22px] items-center gap-1 pl-[7px]">
              <span className="-mr-1 h-[22px] w-[10px] border-l border-dotted border-[#aaa]" />
              <Minus />
              <Check label="Layer1" />
              <span className="leading-5">Layer1</span>
            </div>
            <div className="flex h-[22px] items-center gap-1.5 pl-12">
              <Check label="B" />
              <span className="h-[13px] w-[41px] border border-r-2 border-black bg-[#fac896]" />
              <span className="leading-5 font-bold">B</span>
            </div>
          </div>
          <div className="h-1" />
          <DockTitle title="Apps" />
          <div className="flex flex-1">
            <div className="flex w-[29px] flex-col bg-[#f0f0ee] pl-1">
              {['M1 1H8M1 6H8L4.500 2Z', 'M1 6H8L4.500 2Z', 'M1 2H8L4.500 6Z', 'M1 2H8L4.500 6ZM1 7H8'].map((d, i) => (
                <button key={d} type="button" aria-label={['首个', '向上', '向下', '末个'][i]} className="mr-[3px] flex h-4 items-center justify-center">
                  <svg width="9" height="8" stroke="#000" strokeWidth="1" aria-hidden>
                    <path d={d} />
                  </svg>
                </button>
              ))}
              <button type="button" className="mt-[2px] grid h-14 place-items-center">
                <svg width="25" height="56" className="[grid-area:1/1]" aria-hidden>
                  <path d="M25 1L.5 14V43L25 56" fill="#fff" stroke="#666" />
                </svg>
                <span className="text-[15px] leading-5 font-bold [grid-area:1/1] [text-orientation:sideways] [writing-mode:vertical-rl]">所有</span>
              </button>
              <button type="button" className="grid h-[60px] place-items-center">
                <svg width="25" height="60" className="overflow-visible [grid-area:1/1]" aria-hidden>
                  <path d="M14 -5L.5 2V47L25 60" fill="none" stroke="#666" />
                </svg>
                <span className="pb-2 text-[15px] leading-5 [grid-area:1/1] [text-orientation:sideways] [writing-mode:vertical-rl]">Fitting</span>
              </button>
            </div>
            <div className="flex-1 border border-t-[#777] border-r-[#999] border-b-[#999] border-l-[#888] bg-white pt-[3px]">
              {apps.map(app => (
                <button key={app.label} type="button" className="flex h-[94px] w-[92px] flex-col items-center gap-1 text-base leading-5 whitespace-pre">
                  <svg width="40" height="40" className="shrink-0" aria-hidden>
                    {app.art}
                  </svg>
                  {app.label}
                </button>
              ))}
            </div>
          </div>
        </aside>
      </div>

      <footer className="flex h-[25px] shrink-0 items-center border-t border-[#d2d3de] bg-[#f0f0ee] pr-[2px] pl-1 text-[13px] leading-5">
        <span className="flex-1 text-sm">按F1键打开帮助文档</span>
        <span className="mr-[10px]">--</span>
        {['AU : 开', 'Light Grids', '1:[Book1]Sheet1!Col(B)[1:6]', '1:[Graph1]1!1', '弧度'].map(text => (
          <span key={text} className="border-r border-[#dcdcdc] px-[3px] last:border-0 last:pr-0">
            {text}
          </span>
        ))}
      </footer>
    </div>
  );
}
